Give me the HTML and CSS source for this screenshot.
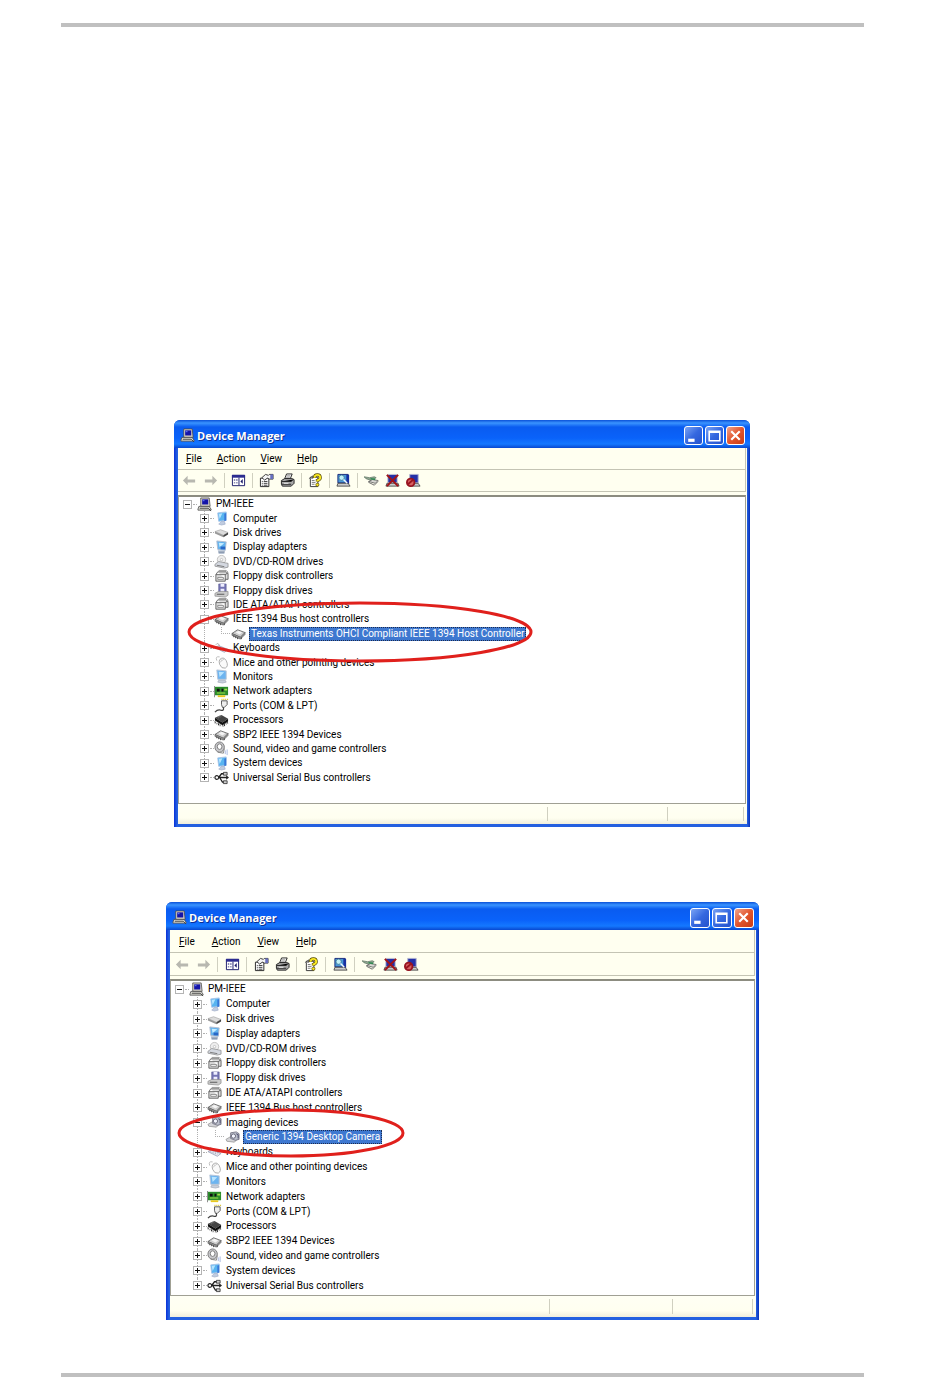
FILE: index.html
```html
<!DOCTYPE html>
<html lang="en">
<head>
    <meta charset="UTF-8">
    <meta name="viewport" content="width=device-width, initial-scale=1.0">
    <title>Device Manager</title>
    <link rel="stylesheet" href="styles.css">
</head>
<body>

    <!-- Icon set, all on a 16x16 grid -->
    <svg class="sprite" aria-hidden="true">
        <symbol id="pc" viewBox="0 0 16 16">
            <path d="M4 1h9l1 9H4z" fill="#d8d4c8" stroke="#444" stroke-width=".8"/>
            <path d="M5.500 2.500h6.500v5.500H5.500z" fill="#1414a8"/><path d="M6 3h2v1.500H6z" fill="#5a6cf0"/>
            <path d="M2 10h11l2 3v1H1v-1z" fill="#d8d8d0" stroke="#444" stroke-width=".8"/>
            <path d="M3 12h9M12 12l3 3" stroke="#444"/>
        </symbol>
        <symbol id="system" viewBox="0 0 16 16">
            <path d="M4 2l9-1v9l-8 1z" fill="#58b4f0" stroke="#a8c4e8"/><path d="M5 3l4-.5-3 6z" fill="#b4e4ff"/>
            <path d="M11 3l2-1v8l-2 1z" fill="#3878d8"/><path d="M8 11h3l1 3-4 1-3-1z" fill="#c0cce0" stroke="#98a4c0" stroke-width=".6"/>
        </symbol>
        <symbol id="disk" viewBox="0 0 16 16">
            <path d="M1 7l6-2 8 3-5 3z" fill="#dcdcdc" stroke="#999" stroke-width=".6"/>
            <path d="M1 7l9 4v2L1 9z" fill="#999"/><path d="M10 11l5-3v2l-5 3z" fill="#444"/>
        </symbol>
        <symbol id="display" viewBox="0 0 16 16">
            <path d="M3 1l10 1-1 9-8-1z" fill="#62b2ee" stroke="#b0bcd0"/><path d="M5 3l6 .5-5 4z" fill="#c4ecff"/>
            <path d="M7 7h5v3H7z" fill="#2868c8"/><path d="M4 11h8l-1 4H5z" fill="#b8c4d4"/><path d="M5 13h6" stroke="#7888a0"/>
        </symbol>
        <symbol id="cd" viewBox="0 0 16 16">
            <circle cx="8" cy="6" r="4.500" fill="#eee" stroke="#aaa" stroke-width=".7"/><circle cx="8" cy="6" r="1.300" fill="#fff" stroke="#999" stroke-width=".5"/>
            <path d="M1 11l4-3 10 2v4l-4 1-10-2z" fill="#d4d8e0" stroke="#808080" stroke-width=".7"/><path d="M3 12l8 1.500" stroke="#777"/>
        </symbol>
        <symbol id="controller" viewBox="0 0 16 16">
            <path d="M4 3h9l2 2v6h-3M4 3L2 6v7h10V6H2" fill="#ddd" stroke="#555" stroke-width=".9"/>
            <path d="M5 1.500h8l2 2" fill="none" stroke="#777" stroke-width=".8"/><path d="M4 9h6v2H4z" fill="#fff" stroke="#666" stroke-width=".7"/><path d="M12 6l3-2" stroke="#555"/>
        </symbol>
        <symbol id="floppy" viewBox="0 0 16 16">
            <path d="M5 1h8v9H5z" fill="#7474b4" stroke="#5a5a92" stroke-width=".6"/><path d="M7 1h4v3H7zM7 6h4v4H7z" fill="#eef"/>
            <path d="M1 11l4-2h10v4l-3 2-11-1z" fill="#ccc" stroke="#888" stroke-width=".7"/><path d="M3 12h8" stroke="#555"/>
        </symbol>
        <symbol id="firewire" viewBox="0 0 16 16">
            <path d="M1 8l6-4 8 3-5 5z" fill="#ccc" stroke="#555" stroke-width=".8"/><path d="M5 7l3-2 4 2-3 2z" fill="#f4f4f4"/>
            <path d="M1 8v2l9 4 5-5V7l-5 5z" fill="#999" stroke="#555" stroke-width=".6"/><path d="M3 10v2M5 11v2M7 12v2M11 12v2" stroke="#444"/>
        </symbol>
        <symbol id="camera" viewBox="0 0 16 16">
            <path d="M1 10l5-3 8 2-4 4-8-1z" fill="#d4d4d8" stroke="#888" stroke-width=".7"/><path d="M6 3l6-1 3 2v6l-4 1-5-2z" fill="#bcc0cc" stroke="#667" stroke-width=".8"/>
            <circle cx="9" cy="6.500" r="2.300" fill="#f4f6ff" stroke="#667"/><path d="M12 4l2 1v4" fill="none" stroke="#446"/>
        </symbol>
        <symbol id="keyboard" viewBox="0 0 16 16">
            <path d="M1 7l4-2 10 4-4 3z" fill="#eceef4" stroke="#9098b0" stroke-width=".8"/><path d="M3 7l8 3M5 6l8 3" stroke="#9098b0" stroke-dasharray="1 1"/><path d="M2 4q2-3 4 1" fill="none" stroke="#aaa"/>
        </symbol>
        <symbol id="mouse" viewBox="0 0 16 16">
            <path d="M3 6q-2-5 3-4" fill="none" stroke="#bbb"/><path d="M6 5q4-4 7 1 3 6-1 8-4 1-6-4-1-3 0-5z" fill="#fafafa" stroke="#aaa"/><path d="M6 8l5-4M8 6l-1-2" stroke="#bbb" stroke-width=".8"/>
        </symbol>
        <symbol id="monitor" viewBox="0 0 16 16">
            <path d="M3 1l10 1v9l-9 0z" fill="#6cb4f0" stroke="#b8c4d8"/><path d="M5 3l6 .5-5 5z" fill="#b8e4ff"/><path d="M5 12h7l1 2-4 1-5-1z" fill="#c8d0dc" stroke="#98a0b0" stroke-width=".6"/>
        </symbol>
        <symbol id="network" viewBox="0 0 16 16">
            <path d="M1 3h14v9H1z" fill="#2c8c2c"/><path d="M3 5h3v3H3zM8 5h2v3H8z" fill="#111"/><path d="M11 5h3v2h-3zM3 9h9v1H3z" fill="#a4e048"/><path d="M4 12h8v2H4z" fill="#e8c820"/><path d="M0 2h1v12H0z" fill="#888"/>
        </symbol>
        <symbol id="port" viewBox="0 0 16 16">
            <path d="M8 3h6v4l-3 3H9L8 7z" fill="#eee" stroke="#444" stroke-width=".9"/><path d="M8 1.500h7" stroke="#d8c020" stroke-width="1.500" stroke-dasharray="1 1"/><path d="M10 10q1 4-3 3-3-1-6 2" fill="none" stroke="#444" stroke-width="1.300"/>
        </symbol>
        <symbol id="cpu" viewBox="0 0 16 16">
            <path d="M1 5l7-3 7 4-6 4z" fill="#444"/><path d="M1 5v3l8 5 6-4V6l-6 4z" fill="#111"/><path d="M4 5l4-2M1 10l7 4M9 14l6-4" stroke="#777" stroke-dasharray="1 1" stroke-width="2"/><path d="M1 9v1M5 11v2M11 12v2M14 10v1" stroke="#111"/>
        </symbol>
        <symbol id="sound" viewBox="0 0 16 16">
            <ellipse cx="6" cy="6.500" rx="5" ry="5.500" fill="#c8c8cc" stroke="#777"/><ellipse cx="6" cy="6" rx="2.500" ry="3" fill="#fff" stroke="#777"/><path d="M4 12l6 1 1-5" fill="none" stroke="#888"/><path d="M12 10v4M14 9v6" stroke="#a8b8e0"/>
        </symbol>
        <symbol id="usb" viewBox="0 0 16 16">
            <path d="M3 8h11M5 8l3-4h4M6 8l3 5h3" fill="none" stroke="#222" stroke-width="1.400"/><circle cx="3" cy="8" r="2" fill="#fff" stroke="#222" stroke-width="1.200"/><path d="M13 5.500l3 2.500-3 2.500z" fill="#222"/><path d="M10 2.500h4v3h-4zM10 11.500h4v3h-4z" fill="#ccc" stroke="#222" stroke-width=".8"/>
        </symbol>

        <symbol id="back" viewBox="0 0 16 16"><path d="M1 8l5-5v4h8v3H6v3z" fill="#b8b8b0"/></symbol>
        <symbol id="forward" viewBox="0 0 16 16"><path d="M15 8l-5-5v4H2v3h8v3z" fill="#b8b8b0"/></symbol>
        <symbol id="pane" viewBox="0 0 16 16">
            <path d="M1.500 2.500h13v11h-13z" fill="#fff" stroke="#181868"/><path d="M1 2h14v3H1z" fill="#2c2c90"/><path d="M8.500 5v8" stroke="#181868"/><path d="M3 7h1.500v1H3zM3 10h1.500v1H3zM5.500 7H7v1H5.500zM5.500 10H7v1H5.500zM12.500 6.500v5L10 9z" fill="#181868"/>
        </symbol>
        <symbol id="properties" viewBox="0 0 16 16">
            <path d="M1.500 5.500h9v9h-9z" fill="#fff" stroke="#222"/><path d="M3 9h1M5 9h4M3 11h1M5 11h4M3 13h1M5 13h4" stroke="#333"/>
            <path d="M3 5l4-3.500 3 1 1-1h4v5h-4l-2-1-3 2z" fill="#f4f4f4" stroke="#222" stroke-width=".9"/><path d="M12 1.500h3v5h-3z" fill="#6870c0"/>
        </symbol>
        <symbol id="print" viewBox="0 0 16 16">
            <path d="M5 6l2-5h6l-2 5z" fill="#fff" stroke="#222"/><path d="M7 3h4M6.500 4.500h4" stroke="#666" stroke-width=".7"/><path d="M1.500 8L5 6h8l2 1v4l-3 3H2.500l-1-2z" fill="#aaa" stroke="#222"/><path d="M2 9h10l2-2M2 12h10" stroke="#222"/><path d="M4 11h5" stroke="#eee"/>
        </symbol>
        <symbol id="help" viewBox="0 0 16 16">
            <path d="M2.500 4.500h8v10h-8z" fill="#fff" stroke="#333"/><path d="M4 8h3M4 10h4M4 12h3" stroke="#777"/><path d="M1 6l4-3v3" fill="#888" stroke="#333" stroke-width=".6"/>
            <path d="M7 5Q7 2 10 2t3 3q0 2-3 3v1" fill="none" stroke="#554800" stroke-width="3.400"/><path d="M7 5Q7 2 10 2t3 3q0 2-3 3v1" fill="none" stroke="#f8e820" stroke-width="2"/><circle cx="10" cy="12.500" r="1.700" fill="#f8e820" stroke="#554800" stroke-width=".7"/>
        </symbol>
        <symbol id="scan" viewBox="0 0 16 16">
            <path d="M2 1.500h11v9H2z" fill="#4898d8" stroke="#182878"/><path d="M11 2h3v10h-3z" fill="#1830a0"/><path d="M2 11h11l2 3H1z" fill="#ccc" stroke="#333" stroke-width=".8"/><circle cx="6" cy="5" r="2.800" fill="#c0f0f8" stroke="#387090" stroke-width=".8"/><path d="M8 7l4 4" stroke="#f0f8ff" stroke-width="1.500"/>
        </symbol>
        <symbol id="update" viewBox="0 0 16 16">
            <path d="M0 4l6 1 5-1 2 1-5 3-6-2z" fill="#90a890" stroke="#64786a" stroke-width=".8"/><path d="M5 9l4-2 6 1-3 3z" fill="#d8d8d4" stroke="#555" stroke-width=".8"/><path d="M5 9v1l6 3 4-4" fill="none" stroke="#666"/><path d="M7 6l5 1" stroke="#2b8b50" stroke-width="1.500"/>
        </symbol>
        <symbol id="uninstall" viewBox="0 0 16 16">
            <path d="M3 1.500h10v9H3z" fill="#2430a8" stroke="#c8c8d0"/><path d="M2 11h12l1 3H1z" fill="#ccc" stroke="#333" stroke-width=".8"/><path d="M2 2l12 12M14 2L2 14" stroke="#a01418" stroke-width="2.200"/>
        </symbol>
        <symbol id="disable" viewBox="0 0 16 16">
            <path d="M4 1.500h9v9H4z" fill="#2430a8" stroke="#b0b4d0"/><path d="M4 11h9l2 3H4z" fill="#ccc" stroke="#333" stroke-width=".8"/><circle cx="5" cy="10" r="4" fill="#d86060" stroke="#981420" stroke-width="2"/><path d="M2 12l6-5" stroke="#981420" stroke-width="2"/>
        </symbol>
    </svg>

    <main class="page">

        <section class="window window-host">
            <header class="titlebar">
                <svg class="icon"><use href="#pc"/></svg>
                <h1>Device Manager</h1>
                <button class="caption" aria-label="Minimize"><svg viewBox="0 0 16 16"><path d="M3 11h6v3H3z" fill="#fff"/></svg></button>
                <button class="caption" aria-label="Maximize"><svg viewBox="0 0 16 16"><path d="M3 4h10v9H3zM3 5h10" fill="none" stroke="#fff" stroke-width="1.500"/></svg></button>
                <button class="caption close" aria-label="Close"><svg viewBox="0 0 16 16"><path d="M4 4l8 8M12 4l-8 8" stroke="#fff" stroke-width="2"/></svg></button>
            </header>
            <div class="client">
                <nav class="menu">
                    <button><u>F</u>ile</button><button><u>A</u>ction</button><button><u>V</u>iew</button><button><u>H</u>elp</button>
                </nav>
                <div class="toolbar">
                    <button aria-label="Back" disabled><svg class="icon"><use href="#back"/></svg></button>
                    <button aria-label="Forward" disabled><svg class="icon"><use href="#forward"/></svg></button>
                    <i></i>
                    <button aria-label="Show tree"><svg class="icon"><use href="#pane"/></svg></button>
                    <i></i>
                    <button aria-label="Properties"><svg class="icon"><use href="#properties"/></svg></button>
                    <button aria-label="Print"><svg class="icon"><use href="#print"/></svg></button>
                    <i></i>
                    <button aria-label="Help"><svg class="icon"><use href="#help"/></svg></button>
                    <i></i>
                    <button aria-label="Scan"><svg class="icon"><use href="#scan"/></svg></button>
                    <i></i>
                    <button aria-label="Update driver"><svg class="icon"><use href="#update"/></svg></button>
                    <button aria-label="Uninstall"><svg class="icon"><use href="#uninstall"/></svg></button>
                    <button aria-label="Disable"><svg class="icon"><use href="#disable"/></svg></button>
                </div>
                <ul class="tree">
                    <li class="root"><button class="box open" aria-label="Collapse"></button><svg class="icon"><use href="#pc"/></svg><span>PM-IEEE</span></li>
                    <li><button class="box" aria-label="Expand"></button><svg class="icon"><use href="#system"/></svg><span>Computer</span></li>
                    <li><button class="box" aria-label="Expand"></button><svg class="icon"><use href="#disk"/></svg><span>Disk drives</span></li>
                    <li><button class="box" aria-label="Expand"></button><svg class="icon"><use href="#display"/></svg><span>Display adapters</span></li>
                    <li><button class="box" aria-label="Expand"></button><svg class="icon"><use href="#cd"/></svg><span>DVD/CD-ROM drives</span></li>
                    <li><button class="box" aria-label="Expand"></button><svg class="icon"><use href="#controller"/></svg><span>Floppy disk controllers</span></li>
                    <li><button class="box" aria-label="Expand"></button><svg class="icon"><use href="#floppy"/></svg><span>Floppy disk drives</span></li>
                    <li><button class="box" aria-label="Expand"></button><svg class="icon"><use href="#controller"/></svg><span>IDE ATA/ATAPI controllers</span></li>
                    <li><button class="box open" aria-label="Collapse"></button><svg class="icon"><use href="#firewire"/></svg><span>IEEE 1394 Bus host controllers</span></li>
                    <li class="child"><b class="branch"></b><svg class="icon"><use href="#firewire"/></svg><span class="selected">Texas Instruments OHCI Compliant IEEE 1394 Host Controller</span>
                        <svg class="ring" viewBox="0 0 346 62" preserveAspectRatio="none"><ellipse cx="173" cy="31" rx="171" ry="29"/></svg></li>
                    <li><button class="box" aria-label="Expand"></button><svg class="icon"><use href="#keyboard"/></svg><span>Keyboards</span></li>
                    <li><button class="box" aria-label="Expand"></button><svg class="icon"><use href="#mouse"/></svg><span>Mice and other pointing devices</span></li>
                    <li><button class="box" aria-label="Expand"></button><svg class="icon"><use href="#monitor"/></svg><span>Monitors</span></li>
                    <li><button class="box" aria-label="Expand"></button><svg class="icon"><use href="#network"/></svg><span>Network adapters</span></li>
                    <li><button class="box" aria-label="Expand"></button><svg class="icon"><use href="#port"/></svg><span>Ports (COM &amp; LPT)</span></li>
                    <li><button class="box" aria-label="Expand"></button><svg class="icon"><use href="#cpu"/></svg><span>Processors</span></li>
                    <li><button class="box" aria-label="Expand"></button><svg class="icon"><use href="#firewire"/></svg><span>SBP2 IEEE 1394 Devices</span></li>
                    <li><button class="box" aria-label="Expand"></button><svg class="icon"><use href="#sound"/></svg><span>Sound, video and game controllers</span></li>
                    <li><button class="box" aria-label="Expand"></button><svg class="icon"><use href="#system"/></svg><span>System devices</span></li>
                    <li><button class="box" aria-label="Expand"></button><svg class="icon"><use href="#usb"/></svg><span>Universal Serial Bus controllers</span></li>
                </ul>
                <footer class="status"><span></span><span></span><span></span></footer>
            </div>
        </section>

        <section class="window window-camera">
            <header class="titlebar">
                <svg class="icon"><use href="#pc"/></svg>
                <h1>Device Manager</h1>
                <button class="caption" aria-label="Minimize"><svg viewBox="0 0 16 16"><path d="M3 11h6v3H3z" fill="#fff"/></svg></button>
                <button class="caption" aria-label="Maximize"><svg viewBox="0 0 16 16"><path d="M3 4h10v9H3zM3 5h10" fill="none" stroke="#fff" stroke-width="1.500"/></svg></button>
                <button class="caption close" aria-label="Close"><svg viewBox="0 0 16 16"><path d="M4 4l8 8M12 4l-8 8" stroke="#fff" stroke-width="2"/></svg></button>
            </header>
            <div class="client">
                <nav class="menu">
                    <button><u>F</u>ile</button><button><u>A</u>ction</button><button><u>V</u>iew</button><button><u>H</u>elp</button>
                </nav>
                <div class="toolbar">
                    <button aria-label="Back" disabled><svg class="icon"><use href="#back"/></svg></button>
                    <button aria-label="Forward" disabled><svg class="icon"><use href="#forward"/></svg></button>
                    <i></i>
                    <button aria-label="Show tree"><svg class="icon"><use href="#pane"/></svg></button>
                    <i></i>
                    <button aria-label="Properties"><svg class="icon"><use href="#properties"/></svg></button>
                    <button aria-label="Print"><svg class="icon"><use href="#print"/></svg></button>
                    <i></i>
                    <button aria-label="Help"><svg class="icon"><use href="#help"/></svg></button>
                    <i></i>
                    <button aria-label="Scan"><svg class="icon"><use href="#scan"/></svg></button>
                    <i></i>
                    <button aria-label="Update driver"><svg class="icon"><use href="#update"/></svg></button>
                    <button aria-label="Uninstall"><svg class="icon"><use href="#uninstall"/></svg></button>
                    <button aria-label="Disable"><svg class="icon"><use href="#disable"/></svg></button>
                </div>
                <ul class="tree">
                    <li class="root"><button class="box open" aria-label="Collapse"></button><svg class="icon"><use href="#pc"/></svg><span>PM-IEEE</span></li>
                    <li><button class="box" aria-label="Expand"></button><svg class="icon"><use href="#system"/></svg><span>Computer</span></li>
                    <li><button class="box" aria-label="Expand"></button><svg class="icon"><use href="#disk"/></svg><span>Disk drives</span></li>
                    <li><button class="box" aria-label="Expand"></button><svg class="icon"><use href="#display"/></svg><span>Display adapters</span></li>
                    <li><button class="box" aria-label="Expand"></button><svg class="icon"><use href="#cd"/></svg><span>DVD/CD-ROM drives</span></li>
                    <li><button class="box" aria-label="Expand"></button><svg class="icon"><use href="#controller"/></svg><span>Floppy disk controllers</span></li>
                    <li><button class="box" aria-label="Expand"></button><svg class="icon"><use href="#floppy"/></svg><span>Floppy disk drives</span></li>
                    <li><button class="box" aria-label="Expand"></button><svg class="icon"><use href="#controller"/></svg><span>IDE ATA/ATAPI controllers</span></li>
                    <li><button class="box" aria-label="Expand"></button><svg class="icon"><use href="#firewire"/></svg><span>IEEE 1394 Bus host controllers</span></li>
                    <li><button class="box open" aria-label="Collapse"></button><svg class="icon"><use href="#camera"/></svg><span>Imaging devices</span></li>
                    <li class="child"><b class="branch"></b><svg class="icon"><use href="#camera"/></svg><span class="selected">Generic 1394 Desktop Camera</span>
                        <svg class="ring" viewBox="0 0 229 50" preserveAspectRatio="none"><ellipse cx="114" cy="25" rx="112" ry="23"/></svg></li>
                    <li><button class="box" aria-label="Expand"></button><svg class="icon"><use href="#keyboard"/></svg><span>Keyboards</span></li>
                    <li><button class="box" aria-label="Expand"></button><svg class="icon"><use href="#mouse"/></svg><span>Mice and other pointing devices</span></li>
                    <li><button class="box" aria-label="Expand"></button><svg class="icon"><use href="#monitor"/></svg><span>Monitors</span></li>
                    <li><button class="box" aria-label="Expand"></button><svg class="icon"><use href="#network"/></svg><span>Network adapters</span></li>
                    <li><button class="box" aria-label="Expand"></button><svg class="icon"><use href="#port"/></svg><span>Ports (COM &amp; LPT)</span></li>
                    <li><button class="box" aria-label="Expand"></button><svg class="icon"><use href="#cpu"/></svg><span>Processors</span></li>
                    <li><button class="box" aria-label="Expand"></button><svg class="icon"><use href="#firewire"/></svg><span>SBP2 IEEE 1394 Devices</span></li>
                    <li><button class="box" aria-label="Expand"></button><svg class="icon"><use href="#sound"/></svg><span>Sound, video and game controllers</span></li>
                    <li><button class="box" aria-label="Expand"></button><svg class="icon"><use href="#system"/></svg><span>System devices</span></li>
                    <li><button class="box" aria-label="Expand"></button><svg class="icon"><use href="#usb"/></svg><span>Universal Serial Bus controllers</span></li>
                </ul>
                <footer class="status"><span></span><span></span><span></span></footer>
            </div>
        </section>

    </main>

</body>
</html>
```
FILE: styles.css
```css
* {
    box-sizing: border-box;
}

body {
    margin: 0;
    background-color: #fff;
    font-family: Roboto, sans-serif;
    font-size: 10px;
    color: #000;
}

.sprite {
    display: none;
}

/* Sheet with a grey rule above and below */
.page {
    margin: 23px 86px 20px 61px;
    padding: 393px 105px 53px 105px;
    border-top: 4px solid #c0c0c0;
    border-bottom: 4px solid #c0c0c0;
}

.window {
    --indent: 17px;
    border-radius: 6px 6px 0 0;
    background: linear-gradient(to right, #0831d9, #2460e0 3px, #2460e0 calc(100% - 3px), #0831b9);
    padding: 0 3px 3px 4px;
}

.window-host {
    margin: 0 9px 75px 8px;
}

.window-camera {
    --indent: 18px;
}

.titlebar {
    display: flex;
    align-items: center;
    gap: 2px;
    height: 28px;
    margin: 0 -3px 0 -4px;
    padding: 3px 5px 0 6px;
    border-radius: 6px 6px 0 0;
    background: linear-gradient(#0a50d8, #3a94ff 3px, #0a5cf0 7px, #0a62fa 18px, #1478ff 24px, #0848d0);
}

.titlebar h1 {
    flex: 1;
    margin: 0;
    font-family: "Open Sans", sans-serif;
    font-size: 11px;
    font-weight: 700;
    color: #fff;
    text-shadow: 1px 1px 0 #0b2f94;
}

button {
    border: none;
    padding: 0;
    background: none;
    font: inherit;
    color: inherit;
}

.icon {
    flex: none;
    display: block;
    width: 15px;
    height: 15px;
}

.caption {
    width: 19px;
    height: 19px;
    border: 1px solid #fff;
    border-radius: 3px;
    background: linear-gradient(135deg, #7ba4f4, #3568e0 50%, #2452cc);
}

.caption svg {
    display: block;
    width: 17px;
    height: 17px;
}

.close {
    background: linear-gradient(135deg, #f0a48c, #e2552d 50%, #c83c14);
}

.client {
    background-color: #fffff0;
}

.menu {
    display: flex;
    gap: 15px;
    height: 22px;
    padding-left: 8px;
    border-bottom: 1px solid #c4c4b4;
}

.toolbar {
    display: flex;
    align-items: center;
    gap: 6px;
    height: 22px;
    padding-left: 4px;
    border-bottom: 1px solid #c4c4b4;
}

.menu,
.toolbar {
    margin-right: 1px;
    border-right: 1px solid #c4c4b4;
}

.toolbar i {
    width: 1px;
    height: 15px;
    background-color: #d0d0c0;
}

.tree {
    display: grid;
    grid-auto-rows: 1fr;
    min-height: 309px;
    margin: 3px 1px 0 0;
    padding: 0 0 18px 4px;
    border: 1px solid #a0a094;
    border-top: 2px solid #8c8c80;
    background-color: #fff;
    list-style: none;
}

.tree li {
    position: relative;
    display: flex;
    align-items: center;
    gap: 5px;
    line-height: 14px;
    padding-left: var(--indent);
    white-space: nowrap;
}

/* icons may overlap the neighbouring rows a little */
.tree .icon {
    margin: -1px 0;
}

.tree li.root {
    padding-left: 0;
}

.tree li.child {
    padding-left: calc(var(--indent) * 2);
    z-index: 1;
}

.tree span {
    margin-left: -2px;
    padding: 0 1px;
}

/* dotted guide that joins the expanders */
.tree li:not(.root)::before {
    content: "";
    position: absolute;
    left: calc(var(--indent) + 4px);
    top: 0;
    bottom: 0;
    border-left: 1px dotted #b0b0b0;
}

.tree li:last-child::before {
    bottom: 50%;
}

.box {
    position: relative;
    flex: none;
    width: 9px;
    height: 9px;
    border: 1px solid #b4b4b4;
    background: linear-gradient(#111, #111) center / 5px 1px no-repeat, linear-gradient(#111, #111) center / 1px 5px no-repeat, #fff;
}

.box.open {
    background: linear-gradient(#111, #111) center / 5px 1px no-repeat, #fff;
}

.box::after {
    content: "";
    position: absolute;
    left: 9px;
    top: 3px;
    width: 4px;
    border-top: 1px dotted #b0b0b0;
}

.branch {
    align-self: flex-start;
    width: 9px;
    height: 7px;
    margin-right: -4px;
    margin-left: 4px;
    border-left: 1px dotted #b0b0b0;
    border-bottom: 1px dotted #b0b0b0;
}

.tree .selected {
    padding: 0 1px;
    line-height: 12px;
    border: 1px dotted #1c2c50;
    background-color: #3e78d0;
    color: #fff;
}

.ring {
    position: absolute;
    left: 4px;
    top: -26px;
    width: 346px;
    height: 62px;
    fill: none;
    stroke: #e0201c;
    stroke-width: 3px;
    pointer-events: none;
}

.status {
    display: flex;
    height: 20px;
    padding: 3px 3px 3px 0;
    background: linear-gradient(#fffff4, #fffff0 70%, #f0eedc);
}

.status span {
    width: 120px;
    border-right: 1px solid #d0d0c0;
}

.status span:first-child {
    flex: 1;
}

.status span:last-child {
    width: 76px;
}

/* the second window is drawn slightly larger */
.window-camera .menu {
    gap: 17px;
    height: 23px;
    padding-left: 9px;
}

.window-camera .toolbar {
    height: 23px;
    padding-left: 5px;
}

.window-camera .toolbar i {
    margin-right: 1px;
}

.window-camera .caption {
    width: 20px;
    height: 20px;
}

.window-camera .tree {
    min-height: 317px;
    padding: 1px 0 2px 4px;
}

.window-camera .ring {
    left: 2px;
    top: -22px;
    width: 229px;
    height: 50px;
}

.window-camera .status {
    height: 21px;
}

.window-camera .status span {
    width: 123px;
}

.window-camera .status span:last-child {
    width: 80px;
}
```
